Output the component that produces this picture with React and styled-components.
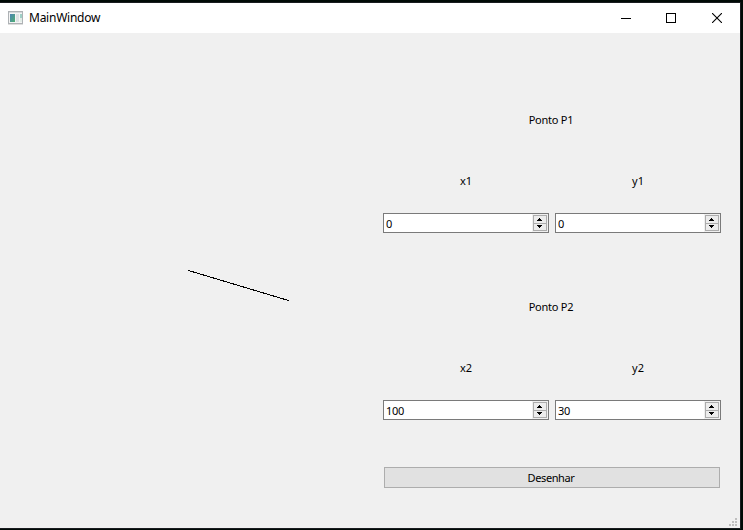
import React, { useState } from "react";
import styled, { createGlobalStyle } from "styled-components";

const GlobalStyle = createGlobalStyle`
  * { box-sizing: border-box; }
  body { margin: 0; background: #000; overflow: hidden; }
`;

const Frame = styled.div`
  width: 743px;
  height: 530px;
  padding: 2px 2px 1px 0;
  background: #000a06;
`;

const Window = styled.main`
  width: 741px;
  height: 527px;
  display: flex;
  flex-direction: column;
  border: solid #191c20;
  border-width: 1px 1px 1px 0;
  background: #f0f0f0;
  font-family: "Noto Sans", sans-serif;
  color: #000;
`;

const TitleBar = styled.header`
  height: 30px;
  flex: none;
  display: flex;
  align-items: center;
  padding-left: 8px;
  background: #fff;
`;

const Title = styled.h1`
  flex: 1;
  margin: 0 0 0 6px;
  font-size: 12px;
  line-height: 16px;
  font-weight: 400;
  letter-spacing: -0.25px;
`;

const WindowButton = styled.button`
  width: 46px;
  height: 30px;
  padding: 0;
  border: 0;
  background: transparent;
  display: flex;
  align-items: center;
  justify-content: center;
`;

const MinimizeButton = styled(WindowButton)`
  padding-left: 2px;
`;

const Icon = styled.svg`
  display: block;
  flex: none;
`;

const Content = styled.div`
  flex: 1;
  display: grid;
  grid-template-columns: 383px 338px;
`;

const Canvas = styled.section`
  padding: 237px 0 0 188px;
`;

const Form = styled.form`
  display: flex;
  flex-direction: column;
`;

const PointGroup = styled.fieldset`
  height: 187px;
  margin: 0;
  padding: 0;
  border: 0;
  min-width: 0;
`;

const Text = styled.div`
  font-size: 11px;
  line-height: 16px;
  text-align: center;
`;

const GroupTitle = styled(Text)`
  padding-top: 79px;
  padding-right: 2px;
  letter-spacing: -0.25px;
`;

const Fields = styled.div`
  display: grid;
  grid-template-columns: 166px 166px;
  column-gap: 6px;
  padding-top: 45px;
`;

const Field = styled.label`
  display: flex;
  flex-direction: column;
  gap: 24px;
`;

const SpinFrame = styled.div`
  height: 20px;
  display: flex;
  border: 1px solid #7a7a7a;
  background: #fff;
`;

const SpinInput = styled.input`
  flex: 1;
  min-width: 0;
  height: 18px;
  padding: 0 0 0 2px;
  border: 0;
  outline: 0;
  background: transparent;
  font: 11px/16px "Noto Sans", sans-serif;
  letter-spacing: -0.35px;
  color: #000;
`;

const Stepper = styled.div`
  width: 16px;
  height: 18px;
  padding: 1px;
  background: #f0f0f0;
`;

const StepButton = styled.button`
  display: flex;
  width: 14px;
  height: ${(p) => (p.$down ? "8px" : "9px")};
  margin: ${(p) => (p.$down ? "-1px 0 0" : "0")};
  padding: ${(p) => (p.$down ? "1px" : "2px")} 0 0 3px;
  border: 1px solid #acacac;
  background: #ececec;
  align-items: flex-start;
  justify-content: flex-start;
`;

const DrawButton = styled.button`
  width: 336px;
  height: 21px;
  margin: 60px 0 0 1px;
  padding: 0 2px 0 0;
  border: 1px solid #adadad;
  background: #e1e1e1;
  font: 11px/19px "Noto Sans", sans-serif;
  letter-spacing: -0.4px;
  color: #000;
`;

const GripRow = styled.footer`
  height: 10px;
  flex: none;
  display: flex;
  justify-content: flex-end;
  padding-right: 3px;
`;

const AppIcon = () => (
  <Icon width="15" height="14" viewBox="0 0 15 14" shapeRendering="crispEdges">
    <defs>
      <linearGradient id="screen" x1="0" y1="0" x2="1" y2="1">
        <stop offset="0" stopColor="#4c83b3" />
        <stop offset="1" stopColor="#4fae72" />
      </linearGradient>
    </defs>
    <path d="M0.5 0.5h14v12h-14z" fill="#f4f4f4" stroke="#aeb2b5" />
    <path d="M1 1h13v1H1z" fill="#d6d9dc" />
    <path d="M2 3h5v8H2z" fill="url(#screen)" />
    <path d="M8 3h3v8H8z" fill="#dce1e3" />
    <path d="M12 3h2v4h-2z" fill="#9fcfc6" />
    <path d="M12 7h2v4h-2z" fill="#e2ece7" />
    <path d="M0 13h15v1H0z" fill="#dedede" />
  </Icon>
);

const Arrow = ({ down }) => (
  <Icon width="5" height="3" viewBox="0 0 5 3" shapeRendering="crispEdges">
    <path d={down ? "M0 0h5v1H0zM1 1h3v1H1zM2 2h1v1H2z" : "M2 0h1v1H2zM1 1h3v1H1zM0 2h5v1H0z"} />
  </Icon>
);

const SpinBox = ({ label, value, onChange }) => (
  <Field>
    <Text>{label}</Text>
    <SpinFrame>
      <SpinInput value={value} onChange={(e) => onChange(Number(e.target.value) || 0)} />
      <Stepper>
        <StepButton type="button" aria-label="+" onClick={() => onChange(value + 1)}><Arrow /></StepButton>
        <StepButton type="button" aria-label="-" $down onClick={() => onChange(value - 1)}><Arrow down /></StepButton>
      </Stepper>
    </SpinFrame>
  </Field>
);

const Point = ({ index, point, onChange }) => (
  <PointGroup>
    <GroupTitle>Ponto P{index}</GroupTitle>
    <Fields>
      <SpinBox label={`x${index}`} value={point.x} onChange={(x) => onChange({ ...point, x })} />
      <SpinBox label={`y${index}`} value={point.y} onChange={(y) => onChange({ ...point, y })} />
    </Fields>
  </PointGroup>
);

export default function App() {
  const [p1, setP1] = useState({ x: 0, y: 0 });
  const [p2, setP2] = useState({ x: 100, y: 30 });
  const [line, setLine] = useState([p1, p2]);
  const draw = (e) => {
    e.preventDefault();
    setLine([p1, p2]);
  };
  return (
    <Frame>
      <GlobalStyle />
      <Window>
        <TitleBar>
          <AppIcon />
          <Title>MainWindow</Title>
          <MinimizeButton aria-label="Minimize">
            <Icon width="10" height="10" shapeRendering="crispEdges"><path d="M0 5h10v1H0z" /></Icon>
          </MinimizeButton>
          <WindowButton aria-label="Maximize">
            <Icon width="10" height="10" shapeRendering="crispEdges"><path d="M0.5 0.5h9v9h-9z" fill="none" stroke="#000" /></Icon>
          </WindowButton>
          <WindowButton aria-label="Close">
            <Icon width="10" height="10"><path d="M0 0l10 10M10 0L0 10" stroke="#000" strokeWidth="1.1" /></Icon>
          </WindowButton>
        </TitleBar>
        <Content>
          <Canvas>
            <Icon width="101" height="31" overflow="visible" shapeRendering="crispEdges">
              <line x1={line[0].x + 0.5} y1={line[0].y + 0.5} x2={line[1].x + 0.5} y2={line[1].y + 0.5} stroke="#000" strokeLinecap="square" />
            </Icon>
          </Canvas>
          <Form onSubmit={draw}>
            <Point index={1} point={p1} onChange={setP1} />
            <Point index={2} point={p2} onChange={setP2} />
            <DrawButton>Desenhar</DrawButton>
          </Form>
        </Content>
        <GripRow>
          <Icon width="8" height="8" fill="#bfbfbf" shapeRendering="crispEdges">
            <path d="M6 0h2v2H6zM3 3h2v2H3zM6 3h2v2H6zM0 6h2v2H0zM3 6h2v2H3zM6 6h2v2H6z" />
          </Icon>
        </GripRow>
      </Window>
    </Frame>
  );
}
